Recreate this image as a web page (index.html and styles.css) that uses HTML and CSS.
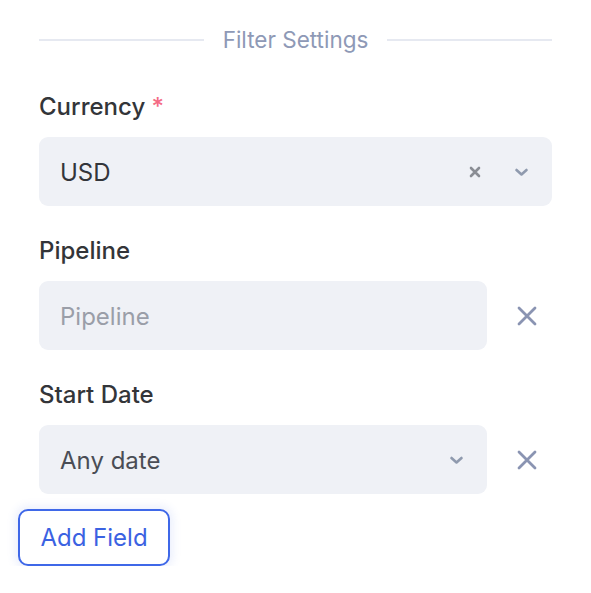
FILE: index.html
```html
<!DOCTYPE html>
<html>
<head>
<meta charset="utf-8">
<link rel="stylesheet" href="styles.css">
</head>
<body>
<div class="panel">
  <div class="divider">
    <span class="line"></span>
    <span class="divider-text">Filter Settings</span>
    <span class="line"></span>
  </div>

  <div class="field">
    <div class="label">Currency <span class="req">*</span></div>
    <div class="row">
      <div class="box select">
        <span class="value">USD</span>
        <span class="clear">
          <svg width="12" height="12" viewBox="0 0 12 12"><path d="M2 2L10 10M10 2L2 10" stroke="#8a8d94" stroke-width="2.6" stroke-linecap="round"/></svg>
        </span>
        <span class="chev">
          <svg width="15" height="10" viewBox="0 0 15 10"><path d="M2.5 3L7.5 7.5L12.5 3" fill="none" stroke="#8f9aae" stroke-width="2.6" stroke-linecap="round" stroke-linejoin="round"/></svg>
        </span>
      </div>
    </div>
  </div>

  <div class="field">
    <div class="label">Pipeline</div>
    <div class="row">
      <div class="box">
        <span class="placeholder">Pipeline</span>
      </div>
      <span class="remove">
        <svg width="20" height="20" viewBox="0 0 20 20"><path d="M2 2L18 18M18 2L2 18" stroke="#8a94b2" stroke-width="2.8" stroke-linecap="round"/></svg>
      </span>
    </div>
  </div>

  <div class="field">
    <div class="label">Start Date</div>
    <div class="row">
      <div class="box select">
        <span class="value muted">Any date</span>
        <span class="chev">
          <svg width="15" height="10" viewBox="0 0 15 10"><path d="M2.5 3L7.5 7.5L12.5 3" fill="none" stroke="#8f9aae" stroke-width="2.6" stroke-linecap="round" stroke-linejoin="round"/></svg>
        </span>
      </div>
      <span class="remove">
        <svg width="20" height="20" viewBox="0 0 20 20"><path d="M2 2L18 18M18 2L2 18" stroke="#8a94b2" stroke-width="2.8" stroke-linecap="round"/></svg>
      </span>
    </div>
  </div>

  <button class="add">Add Field</button>
</div>
</body>
</html>
```

FILE: styles.css
```css
* { box-sizing: border-box; }
html, body { margin: 0; padding: 0; background: #ffffff; }
body { font-family: Inter, "Noto Sans", sans-serif; }

.panel {
  padding: 25px 39px 0 39px;
}

.divider {
  display: flex;
  align-items: center;
  gap: 19px;
  height: 30px;
}
.line {
  flex: 1;
  height: 2px;
  background: #e6e9f1;
}
.divider-text {
  font-size: 22.5px;
  color: #8e99b6;
  line-height: 30px;
}

.field { margin-top: 36px; }
.field + .field { margin-top: 29px; }

.label {
  font-size: 24px;
  font-weight: 500;
  line-height: 30px;
  color: #333539;
  padding-top: 1px;
  margin-bottom: 15px;
}
.req { color: #f46b85; }

.row {
  display: flex;
  align-items: center;
}
.box {
  flex: 1;
  height: 69px;
  background: #eff1f6;
  border-radius: 9px;
  display: flex;
  align-items: center;
  padding: 1px 0 0 21px;
  font-size: 24px;
}
.value { color: #33353a; flex: 1; }
.value.muted { color: #4a4d55; }
.placeholder { color: #9a9ea8; flex: 1; }

.clear {
  display: flex;
  width: 12px;
  margin-right: 33px;
}
.chev {
  display: flex;
  width: 15px;
  margin-right: 23px;
}

.remove {
  display: flex;
  width: 20px;
  margin-left: 30px;
  margin-right: 15px;
}

.add {
  display: block;
  margin: 15px 0 0 -21px;
  width: 152px;
  height: 57px;
  border: 2px solid #3f68e8;
  border-radius: 10px;
  background: #ffffff;
  color: #3b62e2;
  font-family: Inter, "Noto Sans", sans-serif;
  font-size: 24px;
  padding: 0;
  box-shadow: 0 0 8px 3px rgba(90, 120, 230, 0.12);
}
```
